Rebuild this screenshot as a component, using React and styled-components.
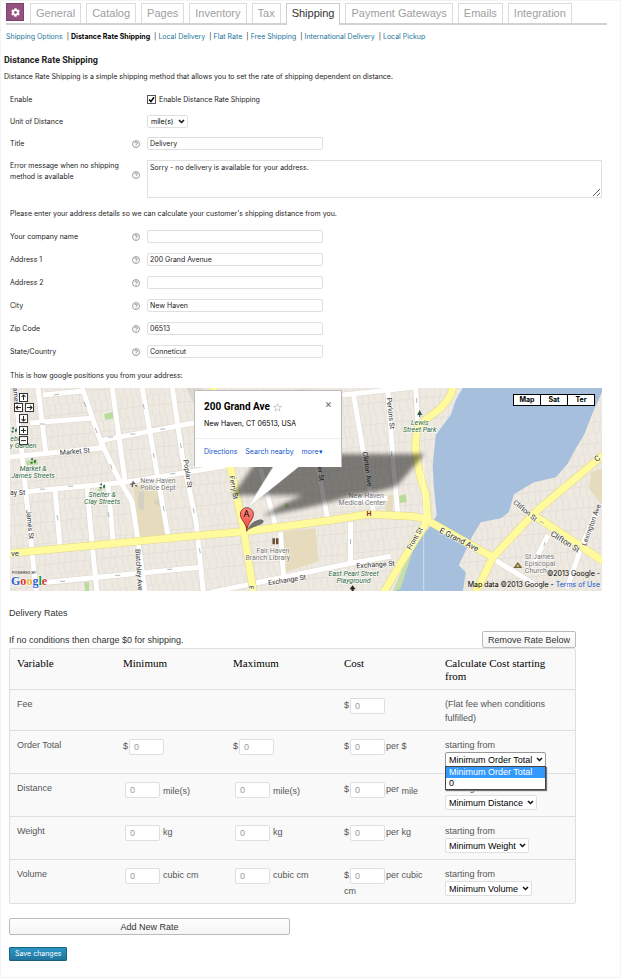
import React from 'react';
import styled, { createGlobalStyle, css } from 'styled-components';
import { FaCog } from 'react-icons/fa';

const GlobalStyle = createGlobalStyle`
  * {
    box-sizing: border-box;
  }
  body {
    margin: 0;
    background: #fff;
    color: #222;
    font-family: Inter, "Liberation Sans", Arial, sans-serif;
    font-size: 7px;
    line-height: 11px;
  }
  a {
    text-decoration: none;
  }
  input, select, textarea, button {
    font-family: inherit;
    color: inherit;
  }
`;

const Page = styled.main`
  border: 1px solid #f4f4f4;
  padding: 2px 13px 16px 3px;
`;

const TabBar = styled.nav`
  display: flex;
  gap: 5px;
  height: 22px;
  margin-left: 2px;
  border-bottom: 2px solid #d2d2d2;
`;

const TabIcon = styled.span`
  display: flex;
  align-items: center;
  justify-content: center;
  width: 18px;
  height: 18px;
  margin-right: 1px;
  background: #93527f;
  border: 1px solid #7d4269;
  color: #fff;
`;

const Tab = styled.a`
  height: 20px;
  padding: 0 5px;
  border: 1px solid #dcdcdc;
  border-bottom: 0;
  font-family: "Liberation Sans", Arial, sans-serif;
  font-size: 11px;
  line-height: 18px;
  white-space: nowrap;
  color: ${({ $active }) => ($active ? '#333' : '#a0a0a0')};
  ${({ $active }) => $active && css`
    height: 22px;
    background: #fff;
    border-color: #ccc;
  `}
`;

const SubNav = styled.nav`
  display: flex;
  gap: 4px;
  margin: 6px 0 0 2px;
  white-space: pre;
  a {
    color: #21759b;
  }
  a[aria-current] {
    color: #000;
    font-weight: bold;
  }
`;

const Heading = styled.h1`
  margin: 12px 0 0;
  font-family: Roboto, sans-serif;
  font-size: 9px;
  line-height: 12px;
`;

const Intro = styled.p`
  margin: 5px 0 6px;
`;

const Form = styled.form`
  margin: 0 5px 0 6px;
`;

const Row = styled.div`
  display: grid;
  grid-template-columns: 122px 15px 1fr;
  align-items: ${({ $tall }) => ($tall ? 'start' : 'center')};
  min-height: ${({ $short }) => ($short ? '22px' : '23px')};
  padding: ${({ $tall }) => ($tall ? '5px 0' : '0')};
  svg {
    margin-top: ${({ $tall }) => ($tall ? '11px' : '0')};
  }
`;

const Control = styled.div`
  grid-column: 3;
  display: flex;
  align-items: center;
  gap: 3px;
`;

const Note = styled.p`
  margin: 0;
  line-height: ${({ $height }) => $height}px;
`;

const TextInput = styled.input`
  width: 176px;
  height: 13px;
  padding: 0 2px;
  border: 1px solid #dfdfdf;
  border-radius: 2px;
  background: #fff;
  font-size: 7px;
`;

const TextArea = styled.textarea`
  display: block;
  width: 100%;
  height: 38px;
  padding: 1px 2px;
  border: 1px solid #dfdfdf;
  font-size: 7px;
  line-height: 11px;
`;

const Tick = styled.input`
  appearance: none;
  width: 9px;
  height: 9px;
  margin: 0;
  border: 1px solid #555;
  background: #fff;
`;

const TickBox = styled.span`
  display: inline-grid;
  > * {
    grid-area: 1 / 1;
  }
  svg {
    pointer-events: none;
  }
`;

const SelectBox = styled.span`
  position: relative;
  display: inline-grid;
  align-items: center;
  vertical-align: top;
  > select, > svg {
    grid-area: 1 / 1;
  }
  > svg {
    justify-self: end;
    margin-right: 3px;
    pointer-events: none;
  }
`;

const Select = styled.select`
  appearance: none;
  height: ${({ $small }) => ($small ? 13 : 15)}px;
  padding: 0 ${({ $small }) => ($small ? 13 : 12)}px 0 3px;
  border: 1px solid ${({ $open }) => ($open ? '#999' : '#dfdfdf')};
  border-radius: 2px;
  background: #fff;
  color: #000;
  font-size: ${({ $small }) => ($small ? 7 : 9)}px;
`;

const Options = styled.ul`
  position: absolute;
  z-index: 1;
  top: 14px;
  left: 0;
  right: 0;
  margin: 0;
  padding: 0;
  list-style: none;
  border: 1px solid #444;
  background: #fff;
  box-shadow: 1px 1px 1px #777;
  color: #000;
  li {
    padding: 0 3px;
    line-height: 11px;
  }
  li[aria-selected='true'] {
    background: #3399ff;
    color: #fff;
  }
`;

const MapBox = styled.div`
  position: relative;
  height: 203px;
  overflow: hidden;
  background: #eeeae2;
`;

const MapSvg = styled.svg`
  display: block;
  width: 100%;
  height: 203px;
  font-family: Roboto, sans-serif;
  font-size: 7px;
`;

const InfoWindow = styled.section`
  position: absolute;
  top: 2px;
  left: 184px;
  width: 148px;
  height: 77px;
  background: #fff;
  border: 1px solid #bbb;
  border-bottom-color: #fff;
  color: #000;
`;

const InfoHead = styled.div`
  display: flex;
  align-items: center;
  padding: 10px 9px 0;
  h2 {
    margin: 0 3px 0 0;
    font-family: Roboto, sans-serif;
    font-size: 10px;
    line-height: 12px;
  }
  button {
    margin: -6px 0 0 auto;
    padding: 0;
    border: 0;
    background: none;
    font-size: 11px;
    line-height: 11px;
    color: #666;
  }
`;

const InfoText = styled.p`
  margin: 5px 0 9px;
  padding-left: 9px;
`;

const InfoLinks = styled.div`
  display: flex;
  gap: 8px;
  padding: 7px 9px 0;
  border-top: 1px solid #eee;
  a {
    color: #15c;
  }
`;

const MapTypes = styled.div`
  position: absolute;
  top: 6px;
  right: 7px;
  display: flex;
  background: #000;
  button {
    width: 28px;
    height: 12px;
    padding: 0;
    border: 1px solid #000;
    background: #fff;
    color: #000;
    font-size: 7px;
    font-weight: bold;
    line-height: 10px;
  }
  button + button {
    margin-left: -1px;
  }
`;

const Credit = styled.p`
  position: absolute;
  right: 2px;
  bottom: 1px;
  margin: 0;
  color: #000;
  text-align: right;
  a {
    color: #15c;
  }
`;

const Rates = styled.section`
  margin: 16px 31px 0 5px;
  font-family: "Liberation Sans", Arial, sans-serif;
  font-size: 9px;
  line-height: 14px;
  color: #333;
  h2, p {
    margin: 0;
    font-size: 9px;
    font-weight: normal;
    line-height: 12px;
  }
`;

const RatesTop = styled.div`
  display: flex;
  align-items: center;
  justify-content: space-between;
  margin-top: 12px;
`;

const GreyButton = styled.button`
  height: 17px;
  width: ${({ $wide }) => ($wide ? '281px' : '94px')};
  margin-top: ${({ $wide }) => ($wide ? '14px' : '0')};
  padding: 0;
  border: 1px solid #bbb;
  border-radius: 2px;
  background: linear-gradient(#fefefe, #f4f4f4);
  font-size: 9px;
`;

const RateTable = styled.table`
  width: 100%;
  table-layout: fixed;
  border: 1px solid #dfdfdf;
  border-radius: 2px;
  border-collapse: separate;
  border-spacing: 0;
  background: #f9f9f9;
  th, td {
    height: 43px;
    padding: 7px 7px 4px;
    text-align: left;
    vertical-align: top;
    font-weight: normal;
    color: #555;
  }
  thead th {
    height: 40px;
    padding-top: 8px;
    font: 11px/13px "Liberation Serif", "Times New Roman", serif;
    color: #000;
  }
  tbody th, tbody td {
    border-top: 1px solid #dfdfdf;
  }
  tbody tr:first-child > * {
    height: 41px;
  }
  tbody tr:last-child > * {
    height: 44px;
  }
`;

const NumberInput = styled.input`
  width: 35px;
  height: 16px;
  margin: ${({ $indent }) => ($indent ? '1px 3px 0 2px' : '1px 1px 0 1px')};
  padding: 0 4px;
  border: 1px solid #dfdfdf;
  border-radius: 2px;
  background: #fff;
  font-size: 9px;
  vertical-align: middle;
  &::placeholder {
    color: #999;
    opacity: 1;
  }
`;

const Lowered = styled.span`
  vertical-align: -2px;
`;

const SaveButton = styled.button`
  display: block;
  height: 14px;
  margin: 12px 0 0 5px;
  padding: 0 5px;
  border: 1px solid #1b607f;
  border-radius: 1px;
  background: linear-gradient(#2a95c5, #21759b);
  color: #fff;
  font-size: 7px;
  line-height: 12px;
`;

const tabs = ['General', 'Catalog', 'Pages', 'Inventory', 'Tax', 'Shipping', 'Payment Gateways', 'Emails', 'Integration'];

const sections = ['Shipping Options', 'Distance Rate Shipping', 'Local Delivery', 'Flat Rate', 'Free Shipping', 'International Delivery', 'Local Pickup'];

const addressFields = [
  { id: 'company', label: 'Your company name', value: '' },
  { id: 'address1', label: 'Address 1', value: '200 Grand Avenue' },
  { id: 'address2', label: 'Address 2', value: '' },
  { id: 'city', label: 'City', value: 'New Haven' },
  { id: 'zip', label: 'Zip Code', value: '06513' },
  { id: 'state', label: 'State/Country', value: 'Conneticut' },
];

const rates = [
  { name: 'Order Total', money: true, per: 'per $', open: true },
  { name: 'Distance', unit: 'mile(s)', per: 'per', lowPer: 'mile', low: true },
  { name: 'Weight', unit: 'kg', per: 'per kg' },
  { name: 'Volume', unit: 'cubic cm', per: 'per cubic cm' },
];

const whiteRoads = [
  'M5 0L12 67L22 164L26 204',
  'M28 0L36 67',
  'M72 0L90 52L105 84L122 114L128 154L135 204',
  'M102 0L115 94',
  'M132 0L158 149',
  'M162 0L172 68L186 135L193 204',
  'M0 69L90 60L93 52L183 35L250 24',
  'M33 7L73 3',
  'M20 35L83 30',
  'M0 105L115 94L190 82L240 74',
  'M45 102L50 159',
  'M77 100L82 157L87 204',
  'M98 97L103 154',
  'M37 194L190 179',
  'M250 80L265 137',
  'M307 77L317 130',
  'M343 7L363 124',
  'M377 0L382 67L387 125',
  'M340 134V175',
  'M270 144L273 187',
  'M200 204L273 189L340 175L380 168',
  'M332 7L405 -1',
  'M328 113L377 110',
  'M405 0L407 34',
  'M480 169L530 200',
  'M588 117L570 160L556 200',
  'M537 147L521 178',
];

const yellowRoads = [
  'M0 165L190 147L237 143L320 132L357 126L400 128Q413 129 420 134L482 169',
  'M465 204L482 169L523 125L592 67',
  'M523 127L567 156L592 173',
  'M442 0Q440 10 430 20L408 37Q404 50 405 64Q409 90 415 105L417 132',
  'M415 135L390 175L372 206',
  'M203 0L220 79L233 140L243 204',
];

const arrows = [
  'M44 7l5 -1', 'M30 36l5 0', 'M74 14l2 5', 'M85 40l2 5', 'M100 76l2 5', 'M133 16l1 5',
  'M170 55l1 5', 'M143 65l1 5', 'M47 127l1 5', 'M98 124l1 5', 'M153 118l1 5', 'M30 101l5 0', 'M58 98l5 0',
  'M98 49l5 0', 'M120 46l5 0', 'M150 41l5 0', 'M160 86l5 -1', 'M105 187l5 0', 'M157 181l5 0', 'M50 193l5 0',
  'M340 151v5', 'M381 63v5', 'M406 10v5', 'M189 160l1 5', 'M183 120l1 5', 'M529 133l4 2', 'M534 154l-1 4',
];

const mapLabels = [
  { text: 'Market St', x: 50, y: 67, turn: -5 },
  { text: 'Market &', x: 23, y: 83, tone: 'park' },
  { text: 'James Streets', x: 23, y: 90, tone: 'park' },
  { text: 'Shelter &', x: 92, y: 109, tone: 'park' },
  { text: 'Clay Streets', x: 92, y: 116, tone: 'park' },
  { text: 'ebar', x: 7, y: 53, tone: 'park' },
  { text: 'y Garden', x: 13, y: 60, tone: 'park' },
  { text: 'New Haven', x: 130, y: 95, tone: 'place' },
  { text: 'Police Dept', x: 130, y: 102, tone: 'place' },
  { text: 'ames', x: 3, y: 0, turn: 85 },
  { text: 'Poplar St', x: 173, y: 72, turn: 81 },
  { text: 'James St', x: 16, y: 122, turn: 84 },
  { text: 'Blatchley Ave', x: 125, y: 161, turn: 86 },
  { text: 'ay St', x: 0, y: 107 },
  { text: 've', x: 1, y: 168, size: 8 },
  { text: 'Ferry St', x: 219, y: 88, turn: 80 },
  { text: 'F', x: 238, y: 198, turn: 80 },
  { text: 'Fair Haven', x: 246, y: 165, tone: 'place' },
  { text: 'Branch Library', x: 235, y: 172, tone: 'place' },
  { text: 'New Haven', x: 338, y: 110, tone: 'place' },
  { text: 'Medical Center', x: 328, y: 117, tone: 'place' },
  { text: 'er St', x: 307, y: 79, turn: 82 },
  { text: 'Clinton Ave', x: 352, y: 64, turn: 82 },
  { text: 'Perkins St', x: 376, y: 10, turn: 84 },
  { text: 'Exchange St', x: 258, y: 197, turn: -9 },
  { text: 'Exchange St', x: 346, y: 180, turn: -4 },
  { text: 'East Pearl Street', x: 343, y: 188, tone: 'park' },
  { text: 'Playground', x: 343, y: 195, tone: 'park' },
  { text: 'Lewis', x: 409, y: 37, tone: 'park' },
  { text: 'Street Park', x: 409, y: 44, tone: 'park' },
  { text: 'E Grand Ave', x: 428, y: 144, turn: 27, size: 8 },
  { text: 'Front St', x: 400, y: 162, turn: -60 },
  { text: 'Clifton St', x: 502, y: 115, turn: 40 },
  { text: 'Clifton St', x: 539, y: 147, turn: 32, size: 8 },
  { text: 'Lexington Ave', x: 575, y: 158, turn: -70 },
  { text: 'C', x: 586, y: 74, turn: -40, size: 8 },
  { text: 'St James', x: 514, y: 171, tone: 'place' },
  { text: 'Episcopal', x: 514, y: 178, tone: 'place' },
  { text: 'Church', x: 514, y: 185, tone: 'place' },
];

const tones = { street: '#333', park: '#2d6a43', place: '#777' };

const panControls = [
  { x: 9, y: 5, d: 'M4.5 7V2M2.5 4l2 -2l2 2' },
  { x: 4, y: 15, d: 'M7 4.5H2M4 2.5l-2 2l2 2' },
  { x: 15, y: 15, d: 'M2 4.5H7M5 2.5l2 2l-2 2' },
  { x: 9, y: 26, d: 'M4.5 2V7M2.5 5l2 2l2 -2' },
  { x: 9, y: 38, d: 'M4.5 2V7M2 4.5H7' },
  { x: 9, y: 48, d: 'M2 4.5H7' },
];

const trees = [[4, 42], [23, 73], [92, 98]];

const Help = () => (
  <svg width="8" height="8" viewBox="0 0 16 16" fill="none" stroke="#777" strokeWidth="1.4" aria-hidden="true">
    <circle cx="8" cy="8" r="7" />
    <path d="M5.6 6.4a2.4 2.4 0 1 1 3.6 2Q8 9 8 10M8 11.4v1.4" strokeWidth="1.8" />
  </svg>
);

const Arrow = () => (
  <svg width="7" height="5" viewBox="0 0 7 5" fill="none" stroke="#111" strokeWidth="1.5" aria-hidden="true">
    <path d="M1 1l2.5 2.5L6 1" />
  </svg>
);

const StreetMap = () => (
  <MapSvg viewBox="0 0 591 203" preserveAspectRatio="xMinYMin slice" role="img" aria-label="Map of New Haven">
    <defs>
      <pattern id="lots" width="26" height="21" patternUnits="userSpaceOnUse" patternTransform="rotate(-6)">
        <path d="M0 0H26M0 11H26M5 0V11M11 0V11M17 0V11M23 0V11M3 11V21M9 11V21M16 11V21M21 11V21" fill="none" stroke="#dfd9cf" strokeWidth="0.6" />
      </pattern>
      <filter id="soft" x="-10%" y="-30%" width="120%" height="160%">
        <feGaussianBlur stdDeviation="2" />
      </filter>
      <linearGradient id="pin" x1="0" y1="0" x2="0" y2="1">
        <stop offset="0" stopColor="#ff8a80" />
        <stop offset="1" stopColor="#e8443a" />
      </linearGradient>
    </defs>
    <rect width="591" height="203" fill="#eeeae2" />
    <rect width="591" height="203" fill="url(#lots)" />
    <path d="M123 97L150 100L156 147L128 150ZM273 143L305 140L308 173L275 184ZM580 84L592 80V118L578 100ZM375 108l7 -2v17l-7 1Z" fill="#e6dcbd" />
    <path d="M128 104l6 -2v20l-6 -1ZM144 113l5 -3v8l-4 -2Z" fill="#d5d0c4" />
    <path d="M94 26l9 -2l1 6l-9 2ZM16 73l11 -1l1 4l-11 1ZM87 101l5 -1v3l-4 0ZM387 108l8 -2l1 8l-8 1ZM274 115l4 0v4l-4 0ZM74 194h5v9h-4Z" fill="#b9dc9a" />
    <path d="M176 0h16v15l-8 2Z" fill="#dcd8d0" />
    <path d="M452 0H591V4L582 24L573 47L565 60L557 75L545 89L523 94L503 106L498 124L490 130L470 134L462 147L448 177L455 184L452 204H382L393 184L403 160L418 140L426 127L423 97L422 77L425 47L440 27L445 12Z" fill="#a5bfdd" />
    <path d="M418 140L403 160L390 200L382 204L392 180L412 145Z" fill="#c5dfa8" />
    <g fill="none" stroke="#ddd7cb" strokeWidth="6">
      {whiteRoads.map((d) => <path key={d} d={d} />)}
    </g>
    <g fill="none" stroke="#fff" strokeWidth="5">
      {whiteRoads.map((d) => <path key={d} d={d} />)}
    </g>
    <g fill="none" stroke="#e0d58f" strokeWidth="8">
      {yellowRoads.map((d) => <path key={d} d={d} />)}
    </g>
    <g fill="none" stroke="#fffb9d" strokeWidth="7">
      {yellowRoads.map((d) => <path key={d} d={d} />)}
    </g>
    <g fill="none" stroke="#9aa2ad" strokeWidth="0.8">
      {arrows.map((d) => <path key={d} d={d} />)}
    </g>
    <path d="M413 68V203" stroke="#fff" strokeWidth="0.8" opacity="0.6" />
    <g fill="none" stroke="#3b6f4c" strokeWidth="2" strokeDasharray="1.6 1.8">
      {trees.map(([cx, cy]) => <circle key={cx} cx={cx} cy={cy} r="2" />)}
    </g>
    <path d="M409 22l2.5 5h-2v2h-1v-2h-2Z" fill="#2d5a3a" />
    <path d="M342 197l3 4h-2v2h-2v-2h-2Z" fill="#222" />
    <path d="M262 150h2.5v6h-2.5ZM265.5 150h2.5v6h-2.5Z" fill="#6b4b35" />
    <path d="M504 179l3 -4l3 4Z" fill="none" stroke="#7b6a2e" strokeWidth="1.5" />
    <path d="M120 96l5 -1M123 93l-1 6M125 97l2 1" stroke="#555" strokeWidth="1.2" />
    {mapLabels.map(({ text, x, y, turn = 0, tone = 'street', size = 7 }) => (
      <text
        key={`${text}${x}`}
        transform={`translate(${x} ${y}) rotate(${turn})`}
        textAnchor={tone === 'park' ? 'middle' : 'start'}
        fontStyle={tone === 'park' ? 'italic' : 'normal'}
        fontSize={size}
        fill={tones[tone]}
        stroke="#fff"
        strokeOpacity="0.7"
        strokeWidth="1.5"
        paintOrder="stroke"
      >
        {text}
      </text>
    ))}
    <text x="356" y="128" fontWeight="bold" fill="#8b2b2b">H</text>
    <path d="M250 66H414L386 98Q360 106 342 107Q310 118 252 128Q270 116 292 107H222Q235 90 250 66Z" fill="#000" opacity="0.48" filter="url(#soft)" />
    <path d="M237 142Q240 133 250 131Q256 132 251 136Q245 138 237 142Z" fill="#222" opacity="0.6" />
    <path d="M263 78H289L237 120Z" fill="#fff" stroke="#ccc" strokeWidth="0.5" />
    <path d="M236.5 143C236 134 230 132 230 126a6.5 6.5 0 0 1 13 0C243 132 237 134 236.5 143Z" fill="url(#pin)" stroke="#7d1f1a" strokeWidth="0.8" />
    <text x="236" y="129" fontSize="9" textAnchor="middle" fill="#000">A</text>
    {panControls.map(({ x, y, d }) => (
      <g key={d} transform={`translate(${x} ${y})`}>
        <rect x="0.5" y="0.5" width="8" height="8" fill="#fff" stroke="#333" />
        <path d={d} fill="none" stroke="#222" strokeWidth="1" />
      </g>
    ))}
    <text x="2" y="186" fontSize="4" fill="#333">POWERED BY</text>
    <text x="1" y="197" fontSize="12" fontFamily="Liberation Serif, serif" fontWeight="bold" stroke="#fff" strokeWidth="1" paintOrder="stroke">
      <tspan fill="#2a5bd7">G</tspan><tspan fill="#d9332b">o</tspan><tspan fill="#eeb211">o</tspan><tspan fill="#2a5bd7">g</tspan><tspan fill="#159a3c">l</tspan><tspan fill="#d9332b">e</tspan>
    </text>
  </MapSvg>
);

const HelpField = ({ id, label, value }) => (
  <Row>
    <label htmlFor={id}>{label}</label>
    <Help />
    <TextInput id={id} type="text" defaultValue={value} />
  </Row>
);

const Amount = ({ label, money, unit, low }) => {
  const Unit = low ? Lowered : 'span';
  return (
    <td>
      {money && '$'}
      <NumberInput $indent={!money} type="text" placeholder="0" aria-label={label} />
      {unit && <Unit>{unit}</Unit>}
    </td>
  );
};

const RateRow = ({ name, money, unit, per, lowPer, low, open }) => (
  <tr>
    <th scope="row">{name}</th>
    <Amount label={`${name} minimum`} money={money} unit={unit} low={low} />
    <Amount label={`${name} maximum`} money={money} unit={unit} low={low} />
    <td>
      $<NumberInput type="text" placeholder="0" aria-label={`${name} cost`} />
      {per}
      {lowPer && <Lowered> {lowPer}</Lowered>}
    </td>
    <td>
      <label htmlFor={`from-${name}`}>starting from</label>
      <br />
      <SelectBox>
        <Select id={`from-${name}`} $open={open}>
          <option>Minimum {name}</option>
          <option>0</option>
        </Select>
        <Arrow />
        {open && (
          <Options role="listbox" aria-label={name}>
            <li role="option" aria-selected="true">Minimum {name}</li>
            <li role="option" aria-selected="false">0</li>
          </Options>
        )}
      </SelectBox>
    </td>
  </tr>
);

const App = () => {
  return (
    <Page>
      <GlobalStyle />
      <TabBar>
        <TabIcon><FaCog size={9} /></TabIcon>
        {tabs.map((tab) => (
          <Tab key={tab} href="#" $active={tab === 'Shipping'}>{tab}</Tab>
        ))}
      </TabBar>
      <SubNav>
        {sections.map((section, i) => (
          <span key={section}>
            {i > 0 && '| '}
            <a href="#" aria-current={i === 1 ? 'page' : undefined}>{section}</a>
          </span>
        ))}
      </SubNav>
      <Heading>Distance Rate Shipping</Heading>
      <Intro>
        Distance Rate Shipping is a simple shipping method that allows you to set the rate of shipping dependent on distance.
      </Intro>
      <Form>
        <Row $short>
          <span>Enable</span>
          <Control>
            <TickBox>
              <Tick id="enable" type="checkbox" defaultChecked />
              <svg width="9" height="9" viewBox="0 0 9 9" fill="none" stroke="#000" strokeWidth="1.5">
                <path d="M2 4.5l2 2L7 2.2" />
              </svg>
            </TickBox>
            <label htmlFor="enable">Enable Distance Rate Shipping</label>
          </Control>
        </Row>
        <Row $short>
          <label htmlFor="unit">Unit of Distance</label>
          <Control>
            <SelectBox>
              <Select id="unit" $small>
                <option>mile(s)</option>
              </Select>
              <Arrow />
            </SelectBox>
          </Control>
        </Row>
        <HelpField id="title" label="Title" value="Delivery" />
        <Row $tall>
          <label htmlFor="error">Error message when no shipping method is available</label>
          <Help />
          <TextArea id="error" defaultValue="Sorry - no delivery is available for your address." />
        </Row>
        <Note $height={22}>
          Please enter your address details so we can calculate your customer's shipping distance from you.
        </Note>
        {addressFields.map((field) => (
          <HelpField key={field.id} {...field} />
        ))}
        <Note $height={25}>This is how google positions you from your address:</Note>
        <MapBox>
          <StreetMap />
          <InfoWindow>
            <InfoHead>
              <h2>200 Grand Ave</h2>
              <svg width="9" height="9" viewBox="0 0 24 24" fill="none" stroke="#bbb" strokeWidth="2">
                <path d="M12 2l3 7h7.5l-6 5l2.3 7.5L12 17l-6.8 4.5L7.5 14l-6 -5H9Z" />
              </svg>
              <button type="button" aria-label="Close">×</button>
            </InfoHead>
            <InfoText>New Haven, CT 06513, USA</InfoText>
            <InfoLinks>
              <a href="#">Directions</a>
              <a href="#">Search nearby</a>
              <a href="#">more▾</a>
            </InfoLinks>
          </InfoWindow>
          <MapTypes>
            <button type="button">Map</button>
            <button type="button">Sat</button>
            <button type="button">Ter</button>
          </MapTypes>
          <Credit>
            ©2013 Google -<br />
            Map data ©2013 Google - <a href="#">Terms of Use</a>
          </Credit>
        </MapBox>
      </Form>
      <Rates>
        <h2>Delivery Rates</h2>
        <RatesTop>
          <p>If no conditions then charge $0 for shipping.</p>
          <GreyButton type="button">Remove Rate Below</GreyButton>
        </RatesTop>
        <RateTable>
          <colgroup>
            <col width="106" />
            <col width="110" />
            <col width="111" />
            <col width="101" />
            <col />
          </colgroup>
          <thead>
            <tr>
              <th scope="col">Variable</th>
              <th scope="col">Minimum</th>
              <th scope="col">Maximum</th>
              <th scope="col">Cost</th>
              <th scope="col">Calculate Cost starting from</th>
            </tr>
          </thead>
          <tbody>
            <tr>
              <th scope="row">Fee</th>
              <td />
              <td />
              <td>
                $<NumberInput type="text" placeholder="0" aria-label="Fee cost" />
              </td>
              <td>(Flat fee when conditions fulfilled)</td>
            </tr>
            {rates.map((rate) => (
              <RateRow key={rate.name} {...rate} />
            ))}
          </tbody>
        </RateTable>
        <GreyButton type="button" $wide>Add New Rate</GreyButton>
      </Rates>
      <SaveButton type="button">Save changes</SaveButton>
    </Page>
  );
};

export default App;
